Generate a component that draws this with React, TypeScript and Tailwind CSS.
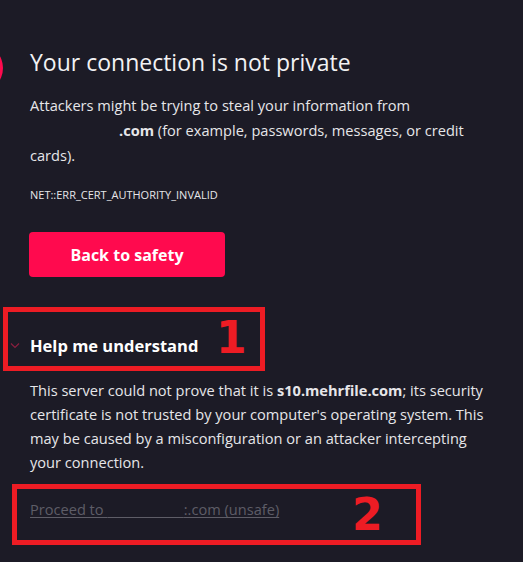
export default function App() {
  return (
    <div
      className="relative h-[562px] w-full overflow-hidden bg-[#1c1b26] text-[#e6e6e9]"
      style={{ fontFamily: '"Open Sans", "Noto Sans", sans-serif' }}
    >
      {/* edge of the red badge, cut off by the window */}
      <div className="absolute -left-[45px] top-[44px] h-12 w-12 rounded-full bg-[#ff0a4e]" />

      <div className="flex flex-col items-start pl-[30px] pr-[33px] pt-[44px]">
        <h1 className="text-[23px] leading-[36px] font-normal text-[#f2f2f4]">Your connection is not private</h1>

        <p className="mt-[13px] text-[14.6px] leading-[25px]">
          Attackers might be trying to steal your information from <span className="inline-block w-[89px]" />
          <span className="font-bold">.com</span> (for example, passwords, messages, or credit cards).
        </p>

        <p className="mt-[17px] text-[11px] leading-[20px]">NET::ERR_CERT_AUTHORITY_INVALID</p>

        <button className="-ml-px mt-[27px] flex h-[45px] w-[196px] items-center justify-center rounded-[4px] bg-[#ff0a4e] text-[16px] font-bold text-white">
          Back to safety
        </button>

        <div className="relative mt-[57px] flex items-center">
          <svg
            className="absolute -left-[20px] top-[8px]"
            width="10"
            height="7"
            viewBox="0 0 10 7"
            fill="none"
            stroke="#8a1f3f"
            strokeWidth="1.2"
          >
            <path d="M1 1.5 L5 5.5 L9 1.5" />
          </svg>
          <span className="text-[16.5px] leading-[24px] font-bold text-white">Help me understand</span>
        </div>

        <p className="mt-[20px] text-[14.6px] leading-[24px]">
          This server could not prove that it is <span className="font-bold">s10.mehrfile.com</span>; its security
          certificate is not trusted by your computer's operating system. This may be caused by a misconfiguration or
          an attacker intercepting your connection.
        </p>

        <a className="mt-[23px] block whitespace-nowrap text-[14.6px] leading-[24px] text-[#5e5d67] underline decoration-[#5e5d67] underline-offset-2">
          Proceed to <span className="text-transparent">s10.mehrfil</span>:.com (unsafe)
        </a>
      </div>

      {/* annotation boxes */}
      <div className="absolute left-[3px] top-[307px] h-[64px] w-[262px] border-[5px] border-[#ed1c24]" />
      <div
        className="absolute left-[216px] top-[308px] text-[44px] font-bold leading-[60px] text-[#ed1c24]"
        style={{ fontFamily: '"DejaVu Sans", sans-serif' }}
      >
        1
      </div>
      <div className="absolute left-[12px] top-[484px] h-[61px] w-[409px] border-[5px] border-[#ed1c24]" />
      <div
        className="absolute left-[352px] top-[485px] text-[44px] font-bold leading-[60px] text-[#ed1c24]"
        style={{ fontFamily: '"DejaVu Sans", sans-serif' }}
      >
        2
      </div>
    </div>
  );
}
